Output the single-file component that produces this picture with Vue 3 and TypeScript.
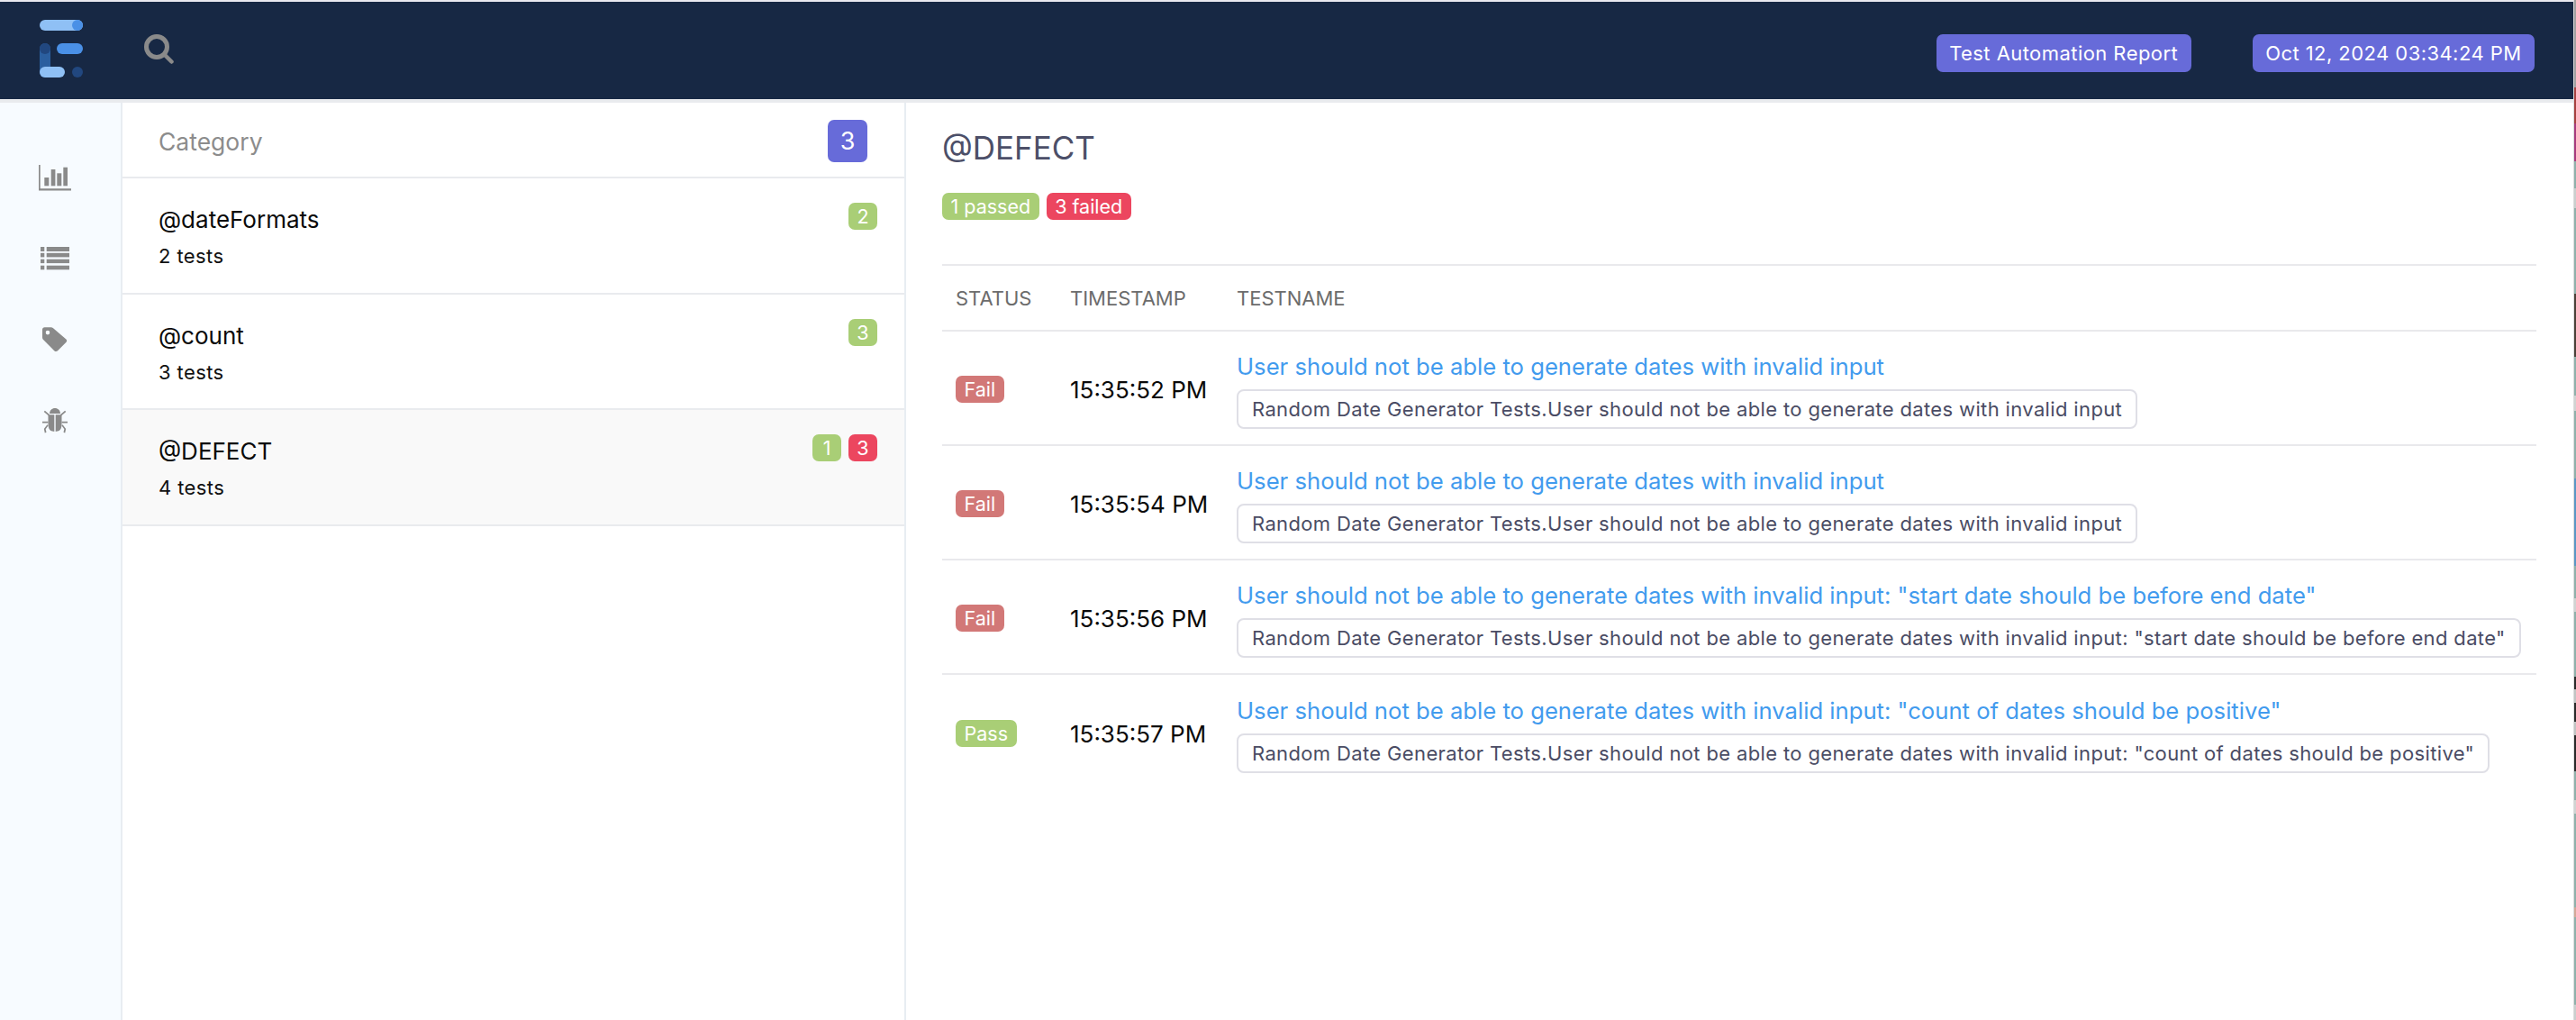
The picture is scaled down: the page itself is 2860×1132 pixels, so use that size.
<script setup lang="ts">
interface Cat { name: string; tests: string; pass?: number; fail?: number; active?: boolean }
interface Row { status: 'Fail' | 'Pass'; time: string; name: string }
const cats: Cat[] = [
  { name: '@dateFormats', tests: '2 tests', pass: 2 },
  { name: '@count', tests: '3 tests', pass: 3 },
  { name: '@DEFECT', tests: '4 tests', pass: 1, fail: 3, active: true },
]
const base = 'User should not be able to generate dates with invalid input'
const rows: Row[] = [
  { status: 'Fail', time: '15:35:52 PM', name: base },
  { status: 'Fail', time: '15:35:54 PM', name: base },
  { status: 'Fail', time: '15:35:56 PM', name: base + ': "start date should be before end date"' },
  { status: 'Pass', time: '15:35:57 PM', name: base + ': "count of dates should be positive"' },
]
</script>

<template>
  <div class="window">
    <div class="page">
      <header class="nav">
        <svg class="logo" width="48" height="64" viewBox="0 0 48 64">
          <rect x="0" y="0" width="48" height="12" rx="6" fill="#8fc0f5" />
          <circle cx="42" cy="6" r="6" fill="#4a90e6" />
          <rect x="0" y="26" width="12" height="38" rx="6" fill="#2b5f9f" />
          <circle cx="6" cy="32" r="6" fill="#21477f" />
          <rect x="19" y="26" width="29" height="12" rx="6" fill="#4a90e6" />
          <rect x="0" y="52" width="28" height="12" rx="6" fill="#8fc0f5" />
          <circle cx="42" cy="58" r="6" fill="#21477f" />
        </svg>
        <svg class="search" width="33" height="33" viewBox="0 0 33 33" fill="none" stroke="#8a8a8a">
          <circle cx="14" cy="14" r="11.500" stroke-width="5" />
          <path d="M23 23 L30.500 30.500" stroke-width="4.500" stroke-linecap="round" />
        </svg>
        <span class="spacer"></span>
        <span class="nav-pill first">Test Automation Report</span>
        <span class="nav-pill">Oct 12, 2024 03:34:24 PM</span>
      </header>

      <div class="body">
        <aside class="rail">
          <div class="slot">
            <svg width="36" height="29" viewBox="0 0 36 29" fill="#8a8a8a">
              <path d="M0 0h1.700v26.200H36v2.300H0z" />
              <rect x="6.300" y="14" width="5" height="9.300" />
              <rect x="13.700" y="5" width="4.700" height="18.300" />
              <rect x="20.300" y="9.300" width="5" height="14" />
              <rect x="27.300" y="2.700" width="4.700" height="20.600" />
            </svg>
          </div>
          <div class="slot">
            <svg width="32" height="26" viewBox="0 0 32 26" fill="#8a8a8a">
              <rect x="0" y="0" width="4.300" height="5" />
              <rect x="6.700" y="0" width="25.300" height="5" />
              <rect x="0" y="6.800" width="4.300" height="4.600" />
              <rect x="6.700" y="6.800" width="25.300" height="4.600" />
              <rect x="0" y="13.700" width="4.300" height="4.400" />
              <rect x="6.700" y="13.700" width="25.300" height="4.400" />
              <rect x="0" y="20.700" width="4.300" height="4.600" />
              <rect x="6.700" y="20.700" width="25.300" height="4.600" />
            </svg>
          </div>
          <div class="slot">
            <svg width="28" height="28" viewBox="0 0 28 28" fill="#8a8a8a">
              <path fill-rule="evenodd" d="M2.500 0.300h7c1 0 1.900.4 2.600 1l14.300 12.200c1 .9 1 2.300.1 3.200L17 26.300c-1 1-2.500 1-3.500.1L1.100 14.100C.4 13.400 0 12.500 0 11.500V2.800C0 1.400 1.100.3 2.500.3zm3.500 3.500a2.300 2.300 0 1 0 0 4.600 2.300 2.300 0 0 0 0-4.600z" />
            </svg>
          </div>
          <div class="slot">
            <svg width="28" height="28" viewBox="0 0 28 28" fill="#8a8a8a">
              <path d="M8 6c0-3.400 2.700-6 6-6s6 2.600 6 6z" />
              <path d="M6.500 7.200h6.800V26c-3.300-.3-5.300-1.500-6-3.500-.6-1.600-.8-3-.8-4.500zM14.700 7.200h6.800V18c0 1.500-.2 2.900-.8 4.500-.7 2-2.700 3.200-6 3.500z" />
              <path d="M0 14.800h6.500v1.800H0zM21.500 14.800H28v1.800h-6.500zM2.900 2.700 8.200 7.200 7 8.500 1.700 4zM25.100 2.700 19.800 7.200 21 8.500 26.300 4zM6.600 19.300 3.700 23.300 4.500 26.800 2.800 27.400 1.800 23 5.400 18.200zM21.400 19.300 24.300 23.300 23.500 26.800 25.200 27.400 26.200 23 22.600 18.200z" />
            </svg>
          </div>
        </aside>

        <section class="list">
          <div class="list-head">
            <span class="list-title">Category</span>
            <span class="count">3</span>
          </div>
          <div v-for="c in cats" :key="c.name" class="item" :class="{ active: c.active }">
            <div class="item-top">
              <span class="item-name">{{ c.name }}</span>
              <span class="badges">
                <span v-if="c.pass" class="badge digit pass">{{ c.pass }}</span>
                <span v-if="c.fail" class="badge digit fail">{{ c.fail }}</span>
              </span>
            </div>
            <div class="item-tests">{{ c.tests }}</div>
          </div>
        </section>

        <main class="detail">
          <h1 class="title">@DEFECT</h1>
          <div class="summary">
            <span class="badge pass">1 passed</span>
            <span class="badge fail">3 failed</span>
          </div>
          <table class="table">
            <colgroup>
              <col class="w1" />
              <col class="w2" />
              <col />
            </colgroup>
            <thead>
              <tr>
                <th class="c1">STATUS</th>
                <th>TIMESTAMP</th>
                <th>TESTNAME</th>
              </tr>
            </thead>
            <tbody>
              <tr v-for="r in rows" :key="r.time">
                <td class="c1">
                  <span class="badge" :class="r.status === 'Fail' ? 'soft-fail' : 'pass'">{{ r.status }}</span>
                </td>
                <td class="time">{{ r.time }}</td>
                <td>
                  <a class="link">{{ r.name }}</a>
                  <div class="tag-row"><span class="tag">Random Date Generator Tests.{{ r.name }}</span></div>
                </td>
              </tr>
            </tbody>
          </table>
        </main>
      </div>
    </div>
    <div class="edge"></div>
  </div>
</template>

<style>
html, body { margin: 0; padding: 0; background: #fff; }
</style>

<style scoped>
.window {
  width: 2860px;
  height: 1132px;
  display: flex;
  overflow: hidden;
  background: #fff;
}
.edge {
  width: 3px;
  flex: none;
  box-sizing: border-box;
  border-left: 1px solid #dcdcdc;
  background: linear-gradient(to bottom,
    #a0a0a0 0 97px, #a5403f 97px 137px, #a63a7c 137px 179px, #8fb0aa 179px 209px,
    #c9cfce 209px 231px, #8fb0aa 231px 326px, #4a4038 326px 396px, #8fb0aa 396px 439px,
    #d0d3d2 439px 456px, #8fb0aa 456px 531px, #5a96c4 531px 628px, #8fb0aa 628px 664px,
    #d0d3d2 664px 679px, #8fb0aa 679px 751px, #2a2a2a 751px 765px, #c0c4c3 765px 780px,
    #2a2a2a 780px 801px, #c0c4c3 801px 816px, #2a2a2a 816px 856px, #8fb0aa 856px 888px,
    #d0d3d2 888px 903px, #8fb0aa 903px 1007px, #d2a898 1007px 1018px, #8fb0aa 1018px 1115px,
    #c9cfce 1115px 1132px);
}
.page {
  width: 2857px;
  flex: none;
  height: 1132px;
  display: flex;
  flex-direction: column;
  font-family: Inter, "Liberation Sans", sans-serif;
  background: #fff;
  border-top: 2px solid #e9e9f0;
  box-sizing: border-box;
}
.nav {
  height: 108px;
  flex: none;
  background: #172844;
  display: flex;
  align-items: center;
  padding: 0 43px 0 44px;
  box-sizing: border-box;
}
.logo { margin-top: -4px; }
.search { margin-left: 68px; margin-top: -3px; }
.spacer { flex: 1; }
.nav-pill {
  background: #676bd9;
  color: #fff;
  font-size: 22px;
  letter-spacing: 0.44px;
  line-height: 42px;
  height: 42px;
  padding: 0 14.500px;
  border-radius: 7px;
  margin-top: 6px;
  white-space: nowrap;
}
.nav-pill.first { margin-right: 68px; }
.body {
  flex: 1;
  display: flex;
  min-height: 0;
  border-top: 4px solid #e9ebee;
}
.rail {
  width: 136px;
  flex: none;
  box-sizing: border-box;
  background: #f7fbff;
  border-right: 2px solid #e8edf2;
  display: flex;
  flex-direction: column;
  padding: 38px 12px 0 0;
}
.slot {
  height: 90px;
  display: flex;
  align-items: center;
  justify-content: center;
}
.list {
  width: 870px;
  flex: none;
  box-sizing: border-box;
  border-right: 2px solid #e8edf2;
}
.list-head {
  height: 84px;
  box-sizing: border-box;
  border-bottom: 2px solid #e9ebee;
  display: flex;
  align-items: center;
  justify-content: space-between;
  padding: 3px 41px 0 40px;
}
.list-title { font-size: 26.500px; color: #8c8c8c; }
.count {
  width: 44px;
  height: 47px;
  line-height: 47px;
  text-align: center;
  background: #676bd9;
  color: #fff;
  border-radius: 7px;
  font-size: 27px;
}
.item {
  height: 128.700px;
  box-sizing: border-box;
  border-bottom: 2px solid #e9ebee;
  padding: 26px 30px 0 40px;
}
.item.active { background: #f9f9f9; }
.item-top { display: flex; justify-content: space-between; align-items: flex-start; }
.item-name { font-size: 26px; color: #0a0a0a; line-height: 40px; }
.badges { display: flex; gap: 8px; margin-top: 1px; }
.badge {
  display: inline-block;
  height: 30px;
  line-height: 30px;
  padding: 0 9.500px;
  font-size: 21.500px;
  border-radius: 7px;
  color: #fff;
  text-align: center;
}
.digit { padding: 0 9px; min-width: 14px; }
.pass { background: #a9ce76; }
.fail { background: #ec465f; }
.soft-fail { background: #d27877; }
.item-tests { font-size: 22px; letter-spacing: 0.4px; color: #111; line-height: 32px; margin-top: 4px; }
.detail {
  flex: 1;
  padding: 20px 41px 0 40px;
  min-width: 0;
}
.title {
  margin: 0;
  font-weight: 400;
  font-size: 35px;
  line-height: 60px;
  color: #4c4f68;
}
.summary { display: flex; gap: 8px; margin-top: 20px; }
.table {
  width: 100%;
  table-layout: fixed;
  border-collapse: separate;
  border-spacing: 0;
  margin-top: 49px;
}
.w1 { width: 142px; }
.w2 { width: 185px; }
th {
  text-align: left;
  font-weight: 400;
  font-size: 22px;
  color: #6c6c6c;
  height: 75px;
  box-sizing: border-box;
  padding: 0;
  border-top: 2px solid #e9e9ec;
  border-bottom: 2px solid #e9e9ec;
}
td {
  padding: 3px 0 0;
  height: 127px;
  box-sizing: border-box;
  border-bottom: 2px solid #e9e9ec;
  vertical-align: middle;
}
th.c1, td.c1 { padding-left: 15px; }
tbody tr:last-child td { border-bottom: none; }
.time { font-size: 26px; color: #0a0a0a; white-space: nowrap; }
.link { color: #429bee; font-size: 25.660px; line-height: 38px; display: block; white-space: nowrap; }
.tag-row { margin-top: 6px; height: 44px; }
.tag {
  display: inline-block;
  border: 2px solid #dfdfe6;
  border-radius: 8px;
  font-size: 22px;
  letter-spacing: 0.36px;
  line-height: 40px;
  padding: 0 15px;
  color: #4a4c64;
  white-space: nowrap;
}
</style>
